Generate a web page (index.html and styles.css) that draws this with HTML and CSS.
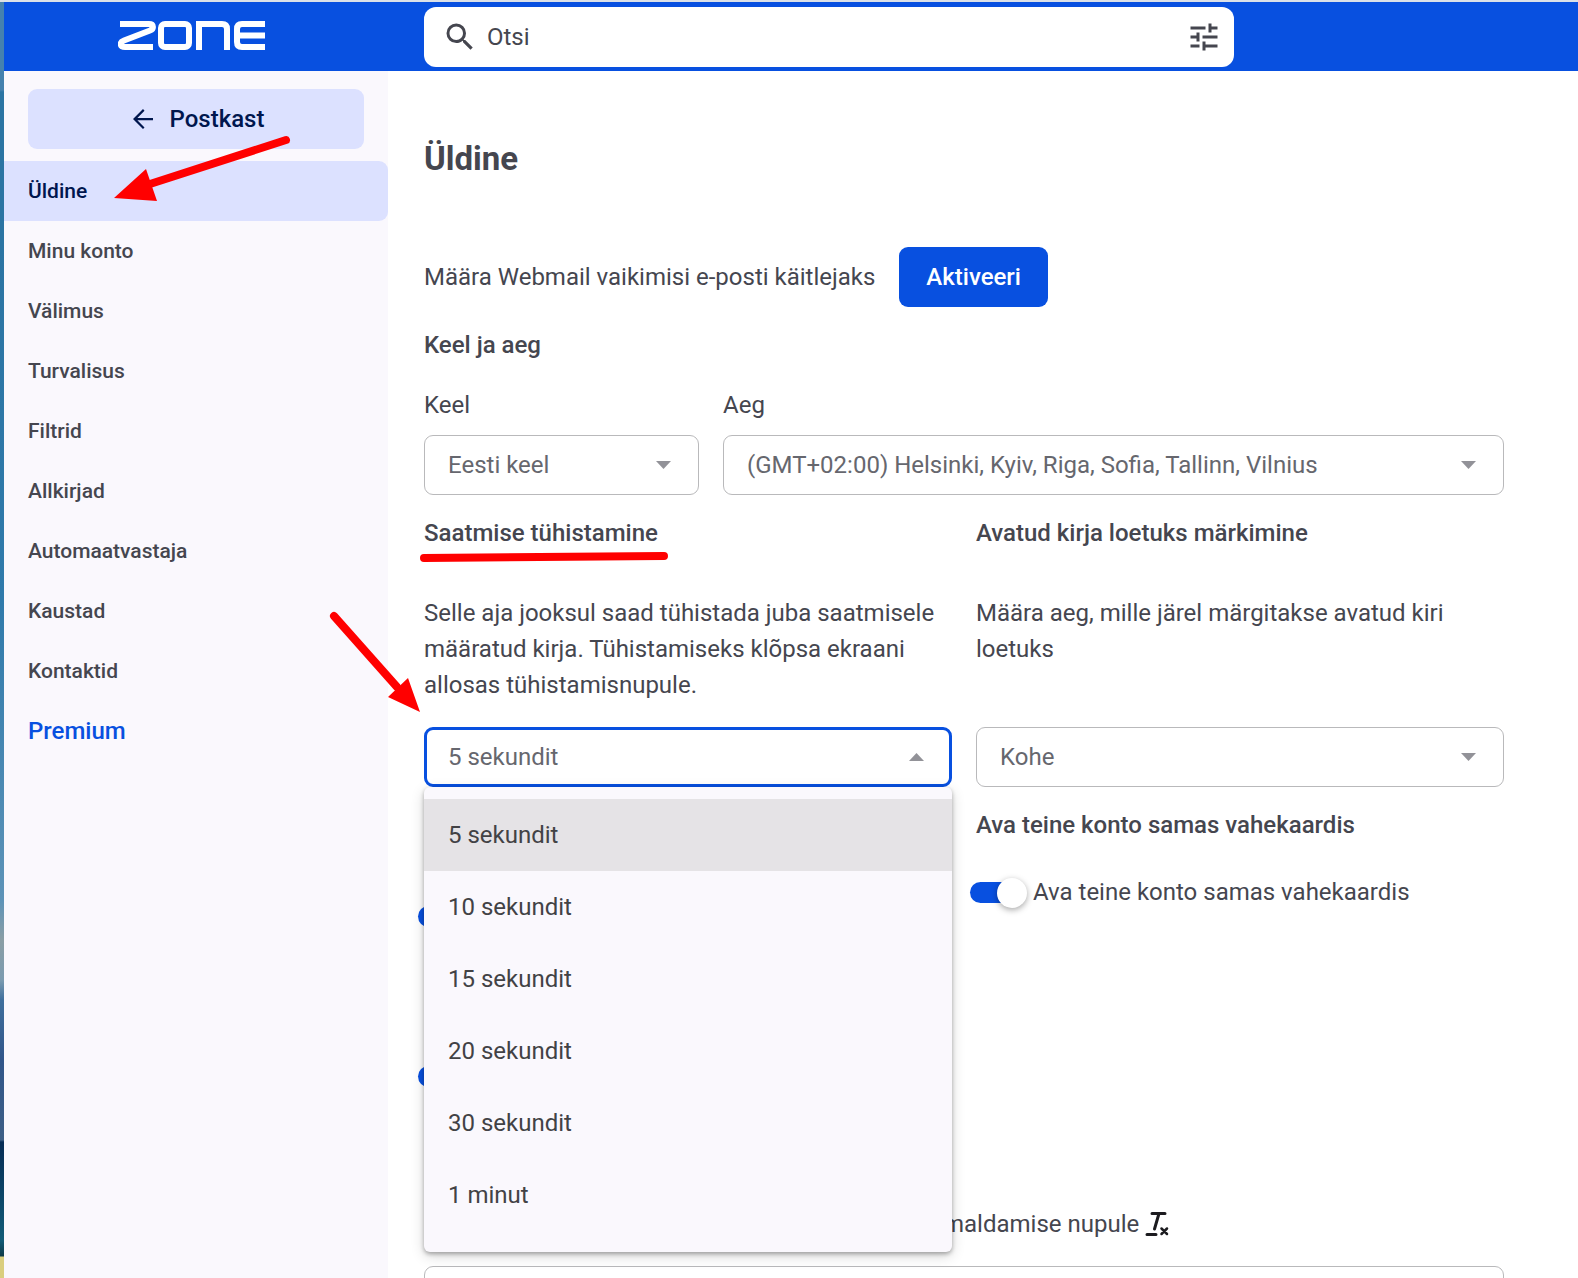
FILE: index.html
```html
<!DOCTYPE html>
<html lang="et">

<head>
    <meta charset="UTF-8">
    <meta name="viewport" content="width=device-width, initial-scale=1.0">
    <title>Üldine - Zone Webmail</title>
    <link rel="stylesheet" href="styles.css">
</head>

<body>

    <!-- Top Bar -->
    <header class="top-bar">
        <a class="logo" href="#" aria-label="Zone">
            <svg width="148" height="30" viewBox="0 0 148 30" fill="none" stroke="#fff" stroke-width="6">
                <path d="M2 3H31C36 3 36 8 32 9.500L6 19.500C1 21.500 2 26 7 26H35" />
                <rect x="43" y="3" width="28" height="23" rx="4" />
                <path d="M81 29V3H104Q109 3 109 8V29" />
                <path d="M147 3H124Q119 3 119 8V21Q119 26 124 26H147M119 14.500H147" />
            </svg>
        </a>
        <form class="search">
            <svg class="icon" viewBox="0 0 24 24"><path d="M15.500 14h-.79l-.28-.27A6.470 6.470 0 0 0 16 9.500 6.500 6.500 0 1 0 9.500 16c1.610 0 3.090-.59 4.230-1.570l.27.28v.79l5 4.990L20.490 19l-4.990-5zm-6 0C7.010 14 5 11.990 5 9.500S7.010 5 9.500 5 14 7.010 14 9.500 11.990 14 9.500 14z" /></svg>
            <input type="text" placeholder="Otsi" aria-label="Otsi">
            <button type="button" class="filter-btn" aria-label="Filter">
                <svg class="icon" viewBox="0 0 24 24"><path d="M3 17v2h6v-2H3zM3 5v2h10V5H3zm10 16v-2h8v-2h-8v-2h-2v6h2zM7 9v2H3v2h4v2h2V9H7zm14 4v-2H11v2h10zm-6-4h2V7h4V5h-4V3h-2v6z" /></svg>
            </button>
        </form>
    </header>

    <div class="layout">
        <!-- Side Menu -->
        <nav class="side-menu">
            <button type="button" class="back-btn">
                <svg viewBox="0 0 24 24"><path d="M20 11.100H7.500l5.700-5.800L12 4l-8 8 8 8 1.200-1.300-5.700-5.800H20z" /></svg>
                Postkast
            </button>
            <a class="active" href="#">Üldine</a>
            <a href="#">Minu konto</a>
            <a href="#">Välimus</a>
            <a href="#">Turvalisus</a>
            <a href="#">Filtrid</a>
            <a href="#">Allkirjad</a>
            <a href="#">Automaatvastaja</a>
            <a href="#">Kaustad</a>
            <a href="#">Kontaktid</a>
            <a class="premium" href="#">Premium</a>
        </nav>

        <!-- Content -->
        <main class="content">
            <h1>Üldine</h1>

            <div class="handler">
                <span>Määra Webmail vaikimisi e-posti käitlejaks</span>
                <button type="button" class="primary-btn">Aktiveeri</button>
            </div>

            <h2>Keel ja aeg</h2>
            <div class="locale">
                <div class="field">
                    <label for="keel">Keel</label>
                    <div class="select">
                        <select id="keel"><option>Eesti keel</option></select>
                    </div>
                </div>
                <div class="field">
                    <label for="aeg">Aeg</label>
                    <div class="select">
                        <select id="aeg"><option>(GMT+02:00) Helsinki, Kyiv, Riga, Sofia, Tallinn, Vilnius</option></select>
                    </div>
                </div>
            </div>

            <div class="columns">
                <section>
                    <h2 id="undo">Saatmise tühistamine</h2>
                    <p>Selle aja jooksul saad tühistada juba saatmisele määratud kirja. Tühistamiseks klõpsa ekraani allosas tühistamisnupule.</p>
                    <div class="select open">
                        <select aria-labelledby="undo"><option>5 sekundit</option></select>
                        <ul class="dropdown" role="listbox" aria-labelledby="undo">
                            <li role="option" aria-selected="true">5 sekundit</li>
                            <li role="option">10 sekundit</li>
                            <li role="option">15 sekundit</li>
                            <li role="option">20 sekundit</li>
                            <li role="option">30 sekundit</li>
                            <li role="option">1 minut</li>
                        </ul>
                    </div>
                    <div class="covered">
                        <input type="checkbox" class="switch" aria-labelledby="undo" checked>
                        <input type="checkbox" class="switch" aria-labelledby="undo" checked>
                    </div>
                </section>
                <section>
                    <h2 id="read">Avatud kirja loetuks märkimine</h2>
                    <p>Määra aeg, mille järel märgitakse avatud kiri loetuks</p>
                    <div class="select">
                        <select aria-labelledby="read"><option>Kohe</option></select>
                    </div>
                    <h2>Ava teine konto samas vahekaardis</h2>
                    <label class="switch-row">
                        <input type="checkbox" class="switch" checked>
                        Ava teine konto samas vahekaardis
                    </label>
                </section>
            </div>

            <div class="format-note">
                <span id="format">maldamise nupule</span>
                <svg width="24" height="26" viewBox="0 0 24 26" fill="none" stroke="#1c1b1f" stroke-width="3" stroke-linecap="round">
                    <path d="M7 2.500H20M14 2.500L9.500 18M2 23.500H11" />
                    <path d="M16.500 17.500L22 23M22 17.500L16.500 23" stroke-width="2.500" />
                </svg>
            </div>
            <textarea class="editor" aria-labelledby="format"></textarea>
        </main>
    </div>

    <!-- Red marks over the page -->
    <svg class="marks" width="700" height="740" fill="#f00" stroke="#f00" stroke-width="8" stroke-linecap="round">
        <path d="M286 140L150 184M334 616L397 687M424 558L664 556" />
        <path d="M114 198L146 169L157 201ZM420 712L408 678L388 697Z" stroke="none" />
    </svg>

</body>

</html>
```

FILE: styles.css
```css
/* General Styles */
* {
    box-sizing: border-box;
}

body {
    display: flex;
    flex-direction: column;
    height: 100vh;
    margin: 0;
    padding-left: 4px;
    border-top: 2px solid #dbe1e8;
    overflow: hidden;
    font-family: Roboto, sans-serif;
    font-size: 24px;
    line-height: 36px;
    color: #45464f;
    /* Desktop showing at the left edge */
    background: linear-gradient(#4581ae 0 90px, #2b74a3 92px 240px, #2f7aab 600px, #5d93b8 900px, #8a9ea5 940px, #7b9bb0 980px, #3f6f9d 1000px, #31568a 1060px, #3d5f86 1140px, #062c55 1142px, #125c78 1240px, #0e3a48 1256px, #dace7e 1257px);
}

h1,
h2,
p {
    margin: 0;
}

h1 {
    font-size: 33px;
    font-weight: 700;
}

h2 {
    font-size: 24px;
    font-weight: 500;
}

button,
input,
select {
    font: inherit;
    color: inherit;
}

button {
    border: none;
    cursor: pointer;
}

.icon {
    display: block;
    flex: none;
    width: 36px;
    height: 36px;
    fill: #45464f;
}

/* Top Bar */
.top-bar {
    display: flex;
    flex: none;
    height: 69px;
    background-color: #0850e0;
}

.logo {
    flex: none;
    width: 420px;
    padding: 19px 0 0 114px;
}

.logo svg {
    display: block;
}

.search {
    display: flex;
    align-items: center;
    flex: 0 1 810px;
    height: 60px;
    margin-top: 5px;
    padding: 0 12px 0 18px;
    border-radius: 12px;
    background-color: #fff;
}

.search input {
    flex: 1;
    min-width: 0;
    padding: 0 9px;
    border: none;
    outline: none;
    background: none;
}

.search input::placeholder {
    color: #45464f;
    opacity: 1;
}

.filter-btn {
    padding: 0;
    background: none;
}

.layout {
    display: flex;
    flex: 1;
    min-height: 0;
    background-color: #fff;
}

/* Side Menu */
.side-menu {
    display: flex;
    flex-direction: column;
    flex: none;
    width: 384px;
    padding-top: 18px;
    background-color: #faf8fd;
}

.side-menu a {
    height: 60px;
    padding-left: 24px;
    border-radius: 0 9px 9px 0;
    font-size: 21px;
    font-weight: 500;
    line-height: 60px;
    color: #45464f;
    text-decoration: none;
}

.side-menu a.active {
    background-color: #dce1ff;
    color: #00164e;
}

.side-menu a.premium {
    font-size: 24px;
    color: #0850e0;
}

.back-btn {
    display: flex;
    align-items: center;
    justify-content: center;
    gap: 12px;
    height: 60px;
    margin: 0 24px 12px;
    border-radius: 9px;
    background-color: #dce1ff;
    color: #00164e;
    font-weight: 500;
}

.back-btn svg {
    width: 30px;
    height: 30px;
    fill: #00164e;
}

/* Content */
.content {
    flex: 1;
    min-width: 0;
    padding: 70px 74px 0 36px;
    overflow: hidden;
}

.handler {
    display: flex;
    align-items: center;
    gap: 24px;
    margin: 70px 0 20px;
}

.primary-btn {
    height: 60px;
    padding: 0 27px;
    border-radius: 9px;
    background-color: #0850e0;
    color: #fff;
    font-weight: 500;
}

.locale {
    display: grid;
    grid-template-columns: 275px 1fr;
    gap: 24px;
    margin: 24px 0 20px;
}

.field label {
    display: block;
    margin-bottom: 12px;
}

/* Drop-downs */
.select {
    position: relative;
}

.select select {
    display: block;
    width: 100%;
    height: 60px;
    padding: 0 60px 0 23px;
    border: 1px solid #b9b9bb;
    border-radius: 9px;
    appearance: none;
    background-color: #fff;
    color: #66676e;
}

.select::after {
    content: "";
    position: absolute;
    top: 26px;
    right: 28px;
    width: 15px;
    height: 8px;
    background-color: #929298;
    clip-path: polygon(0 0, 100% 0, 50% 100%);
    pointer-events: none;
}

.select.open select {
    padding-left: 21px;
    border: 3px solid #0850e0;
}

.select.open::after {
    clip-path: polygon(50% 0, 100% 100%, 0 100%);
}

.dropdown {
    position: absolute;
    top: 100%;
    left: 0;
    z-index: 1;
    width: 100%;
    margin: 0;
    padding: 12px 0 21px;
    border-radius: 6px;
    background-color: #faf8fd;
    box-shadow: 0 2px 4px rgba(0, 0, 0, 0.3), 0 4px 14px rgba(0, 0, 0, 0.16);
    color: #424245;
    list-style: none;
}

.dropdown li {
    padding: 18px 24px;
}

.dropdown li[aria-selected="true"] {
    background-color: #e5e3e6;
}

/* Two columns of settings */
.columns {
    display: grid;
    grid-template-columns: 1fr 1fr;
    gap: 24px;
}

.columns p {
    min-height: 108px;
    margin: 44px 0 24px;
}

.columns .select + h2 {
    margin-top: 20px;
}

/* Switches */
.switch {
    display: block;
    flex: none;
    position: relative;
    width: 54px;
    height: 21px;
    margin: 0;
    border-radius: 11px;
    appearance: none;
    background-color: #0850e0;
}

.switch::after {
    content: "";
    position: absolute;
    top: -4px;
    right: -3px;
    width: 30px;
    height: 30px;
    border-radius: 50%;
    background-color: #fff;
    box-shadow: 0 2px 6px rgba(0, 0, 0, 0.35);
}

.switch-row {
    display: flex;
    align-items: center;
    gap: 9px;
    margin: 31px 0 0 -6px;
}

.covered {
    display: grid;
    gap: 139px;
    margin: 119px 0 0 -6px;
}

.format-note {
    display: flex;
    align-items: center;
    gap: 6px;
    margin: 119px 0 24px;
    padding-left: calc(50% - 21px);
}

.editor {
    display: block;
    width: 100%;
    height: 240px;
    border: 1px solid #b9b9bb;
    border-radius: 9px;
    resize: none;
}

/* Marks */
.marks {
    position: absolute;
    top: 0;
    left: 0;
    z-index: 2;
    pointer-events: none;
}
```
